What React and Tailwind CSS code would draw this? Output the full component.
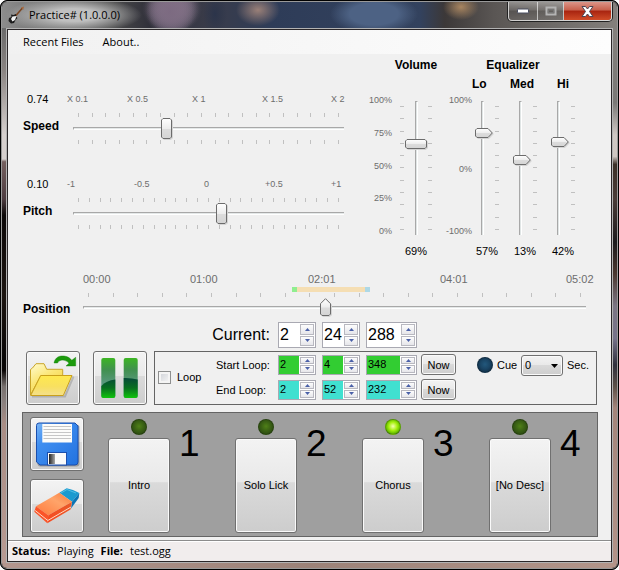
import { useState } from "react";

const UI = "font-['Liberation_Sans',Arial,sans-serif]";
const SEGOE = "font-['Open_Sans','Noto_Sans',sans-serif]";
const FACE =
  "rounded-[3px] border border-[#707070] shadow-[inset_0_0_0_1px_#fafafa] bg-[linear-gradient(#f3f3f3,#e9e9e9_46%,#dadada_47%,#cdcdcd)]";

function Ticks({ count, vertical = false, className = "" }) {
  return (
    <div className={`flex justify-between ${vertical ? "w-1 flex-col py-[5px]" : "h-1 px-[5px]"} ${className}`}>
      {Array.from({ length: count }, (_, i) => (
        <span key={i} className={vertical ? "h-px w-1 bg-[#c0c0c0]" : "h-1 w-px bg-[#c0c0c0]"} />
      ))}
    </div>
  );
}

const THUMBS = {
  tall: { w: 11, h: 21, d: "M2 .5H9L10.500 2V19L9 20.500H2L.5 19V2Z" },
  up: { w: 11, h: 18, d: "M5.500 .7 10.500 5.700V16L9 17.500H2L.5 16V5.700Z" },
  wide: { w: 22, h: 10, d: "M2 .5H20L21.500 2V8L20 9.500H2L.5 8V2Z" },
  right: { w: 18, h: 10, d: "M2 .5H13L17.300 5 13 9.500H2L.5 8V2Z" },
};

function Thumb({ kind }) {
  const t = THUMBS[kind];
  return (
    <svg width={t.w} height={t.h} viewBox={`0 0 ${t.w} ${t.h}`} className="block drop-shadow-[1px_1px_0_#d4d4d4]">
      <defs>
        <linearGradient id={`thumb-${kind}`} x1="0" y1="0" x2="0" y2="1">
          <stop offset="0" stopColor="#fff" />
          <stop offset=".5" stopColor="#ededed" />
          <stop offset=".55" stopColor="#dcdcdc" />
          <stop offset="1" stopColor="#d4d4d4" />
        </linearGradient>
      </defs>
      <path d={t.d} fill={`url(#thumb-${kind})`} stroke="#6c6c6c" />
    </svg>
  );
}

function HSlider({ label, min, max, step, initial, ticks, oneSided = false }) {
  const [value, setValue] = useState(initial);
  const pos = ((value - min) / (max - min)) * 100;
  return (
    <div className={`relative flex flex-col ${oneSided ? "h-6 gap-[9px]" : "h-[31px] justify-between"}`}>
      <Ticks count={ticks} />
      <div className="h-[3px] border-t border-b border-l border-t-[#a8a8a8] border-b-white border-l-[#a8a8a8] bg-[#e4e8e8]" />
      {!oneSided && <Ticks count={ticks} />}
      <div className="absolute top-[5px] right-[11px] left-0">
        <div className="absolute top-0" style={{ left: `${pos}%` }}>
          <Thumb kind={oneSided ? "up" : "tall"} />
        </div>
      </div>
      <input
        type="range"
        aria-label={label}
        min={min}
        max={max}
        step={step}
        value={value}
        onChange={(e) => setValue(+e.target.value)}
        className="absolute inset-0 h-full w-full opacity-0"
      />
    </div>
  );
}

function VSlider({ label, min, initial, kind }) {
  const [value, setValue] = useState(initial);
  const pos = ((100 - value) / (100 - min)) * 100;
  const wide = kind === "wide";
  return (
    <div className={`relative flex h-full justify-between ${wide ? "w-8" : "w-6"}`}>
      {wide && <Ticks count={11} vertical />}
      <div className={`w-[3px] border-t border-r border-l border-t-[#a8a8a8] border-r-white border-l-[#a8a8a8] bg-[#e0e5e5] ${wide ? "" : "ml-[6px]"}`} />
      <Ticks count={11} vertical />
      <div className={`absolute top-0 bottom-[10px] ${wide ? "left-[5px]" : "left-0"}`}>
        <div className="absolute left-0" style={{ top: `${pos}%` }}>
          <Thumb kind={kind} />
        </div>
      </div>
      <input
        type="range"
        aria-label={label}
        min={min}
        max={100}
        value={value}
        onChange={(e) => setValue(+e.target.value)}
        className="absolute inset-0 h-full w-full opacity-0 [direction:rtl] [writing-mode:vertical-lr]"
      />
    </div>
  );
}

function SpinButton({ up, label, onClick }) {
  return (
    <button
      type="button"
      aria-label={label}
      onClick={onClick}
      className="flex w-[14px] flex-1 items-center justify-center border border-[#b8b8c0] bg-[linear-gradient(#fdfdfd,#e6e6ea)]"
    >
      <svg width="5" height="3" viewBox="0 0 5 3" fill="#4a60a8">
        <path d={up ? "M2.500 0 5 3H0Z" : "M0 0H5L2.500 3Z"} />
      </svg>
    </button>
  );
}

function Spinner({ label, initial, wide = false, big = false, tone = "bg-white" }) {
  const [value, setValue] = useState(initial);
  return (
    <div className={`flex border border-[#a9a9b2] bg-white ${wide ? "w-[51px]" : "w-[38px]"} ${big ? "h-[26px]" : "h-5"}`}>
      <input
        type="text"
        inputMode="numeric"
        aria-label={label}
        value={value}
        onChange={(e) => setValue(Number(e.target.value) || 0)}
        className={`min-w-0 flex-1 pl-px leading-4 outline-none ${tone} ${big ? "text-[16px]" : "pb-[2px] text-[11px]"}`}
      />
      <div className="flex flex-col gap-px p-px">
        <SpinButton up label={`Increase ${label}`} onClick={() => setValue(value + 1)} />
        <SpinButton label={`Decrease ${label}`} onClick={() => setValue(value - 1)} />
      </div>
    </div>
  );
}

function TimeFields({ name, values, big, tone }) {
  return (
    <div className="flex gap-[6px]">
      <Spinner label={`${name} minutes`} initial={values[0]} big={big} tone={tone} />
      <Spinner label={`${name} seconds`} initial={values[1]} big={big} tone={tone} />
      <Spinner label={`${name} milliseconds`} initial={values[2]} big={big} tone={tone} wide />
    </div>
  );
}

const LED = {
  on: "bg-[radial-gradient(circle_at_50%_45%,#f4ffb0,#a6f010_40%,#6cc400_65%,#3f7010_90%)]",
  off: "bg-[radial-gradient(circle_at_50%_45%,#4f8018,#3a6114_45%,#2c4a12_80%)]",
  cue: "bg-[radial-gradient(circle_at_50%_45%,#22587c,#1a4565_45%,#123048_80%)]",
};

function Led({ state }) {
  return <span className={`block size-4 rounded-full border border-[#00000030] ${LED[state]}`} />;
}

function Bank({ number, text, active = false }) {
  return (
    <div className="flex gap-[9px]">
      <div className="flex flex-col items-center gap-[3px]">
        <Led state={active ? "on" : "off"} />
        <button type="button" className={`h-[95px] w-[62px] text-[11px] ${FACE}`}>
          {text}
        </button>
      </div>
      <span className="mt-[6px] w-[21px] text-[37px] leading-[37px]">{number}</span>
    </div>
  );
}

function IconButton({ label, children }) {
  return (
    <button type="button" aria-label={label} className={`size-[54px] shrink-0 ${FACE}`}>
      <svg viewBox="1 1 52 52" className="block size-[52px]">
        {children}
      </svg>
    </button>
  );
}

function OpenIcon() {
  return (
    <>
      <defs>
        <linearGradient id="folder-back" x1="0" y1="0" x2=".6" y2="1">
          <stop offset="0" stopColor="#fffbd0" />
          <stop offset=".5" stopColor="#fbe676" />
          <stop offset="1" stopColor="#f2d040" />
        </linearGradient>
        <linearGradient id="folder-front" x1="0" y1="0" x2="0" y2="1">
          <stop offset="0" stopColor="#ffe94e" />
          <stop offset=".55" stopColor="#f8e060" />
          <stop offset="1" stopColor="#f4e08c" />
        </linearGradient>
      </defs>
      <path d="M6 45.500H39L47.500 25.500" fill="none" stroke="#00000028" strokeWidth="2" />
      <path d="M4.500 44V18.500L6.500 17 10 12.700H18L20.700 18.300H36.700V25H14.700Z" fill="url(#folder-back)" stroke="#c9a52a" strokeLinejoin="round" />
      <path d="M14.700 24.500H46L37.300 44.500H4.700Z" fill="url(#folder-front)" stroke="#c9a01c" strokeLinejoin="round" />
      <path d="M28 12C29 6 34 4.500 38 5 42 5.400 44.500 7.500 45.800 9.300L49.700 6.300V15H40L43 12.200C40 8.800 34 7.500 31.500 12Z" fill="#1c9a0c" stroke="#12800a" strokeWidth=".4" />
    </>
  );
}

function PauseIcon() {
  return (
    <>
      <defs>
        <linearGradient id="pause-top" x1="0" y1="6" x2="0" y2="35" gradientUnits="userSpaceOnUse">
          <stop offset="0" stopColor="#3cb820" />
          <stop offset=".45" stopColor="#419050" />
          <stop offset="1" stopColor="#5e9a88" />
        </linearGradient>
        <linearGradient id="pause-low" x1="0" y1="27" x2="0" y2="47" gradientUnits="userSpaceOnUse">
          <stop offset="0" stopColor="#064a38" />
          <stop offset=".5" stopColor="#087020" />
          <stop offset="1" stopColor="#10c40c" />
        </linearGradient>
      </defs>
      <rect x="8.300" y="7" width="14" height="40" rx="2" fill="url(#pause-top)" />
      <path d="M8.300 35Q13 29.500 22.300 28.500V45Q22.300 47 20.300 47H10.300Q8.300 47 8.300 45Z" fill="url(#pause-low)" />
      <rect x="30.700" y="7" width="14" height="40" rx="2" fill="url(#pause-top)" />
      <path d="M30.700 27Q38 26.700 44.700 28.500V45Q44.700 47 42.700 47H32.700Q30.700 47 30.700 45Z" fill="url(#pause-low)" />
    </>
  );
}

function SaveIcon() {
  return (
    <>
      <defs>
        <linearGradient id="disk" x1="0" y1="0" x2="1" y2="1">
          <stop offset="0" stopColor="#7ab6f6" />
          <stop offset=".3" stopColor="#3f8ef0" />
          <stop offset="1" stopColor="#2272e0" />
        </linearGradient>
        <linearGradient id="shutter">
          <stop offset="0" stopColor="#222" />
          <stop offset="1" stopColor="#a8a8a8" />
        </linearGradient>
      </defs>
      <rect x="7.500" y="7.500" width="42" height="42" rx="3" fill="#00000040" />
      <path d="M9 6H45L48 9V45Q48 48 45 48H10L6.500 45V8.500Q6.500 6 9 6Z" fill="url(#disk)" stroke="#1b4fae" />
      <rect x="12.300" y="7" width="29.700" height="18.500" fill="#fcfcfa" />
      <path d="M13.500 9.500H41M13.500 12.500H41M13.500 15.500H41M13.500 18.500H41M13.500 21.500H41" stroke="#c6c6c6" />
      <rect x="17.500" y="35.500" width="19" height="12.500" fill="#fafafa" stroke="#1b4fae" />
      <rect x="19" y="37" width="6" height="10" fill="url(#shutter)" />
    </>
  );
}

function EraserIcon() {
  return (
    <>
      <defs>
        <linearGradient id="rubber" x1="0" y1="1" x2="1" y2="0">
          <stop offset="0" stopColor="#ff7a3c" />
          <stop offset=".6" stopColor="#ffa46a" />
          <stop offset="1" stopColor="#f87838" />
        </linearGradient>
        <linearGradient id="rubber-side" x1="0" y1="1" x2="1" y2="0">
          <stop offset="0" stopColor="#f84a20" />
          <stop offset="1" stopColor="#e85a28" />
        </linearGradient>
      </defs>
      <path d="M29.300 13.700 36.700 9.300Q43 10.500 49.300 14L42 22.700Z" fill="#1a9ad0" />
      <path d="M42 22.700 49.300 14 48.700 19 41 29.500Z" fill="#0b74b4" />
      <path d="M31 14 37 10.500 46 14" fill="none" stroke="#50bfe4" />
      <path d="M6 27.300 29.300 13.700 42 22.700 18.300 36.300Z" fill="url(#rubber)" />
      <path d="M6 27.300 18.300 36.300 17.300 44.300 4.300 32.800Z" fill="#fb5428" />
      <path d="M18.300 36.300 42 22.700 40.500 30.500 17.300 44.300Z" fill="url(#rubber-side)" />
      <path d="M5.200 31.500 17.800 41.500 41 28" fill="none" stroke="#ffd9c4" strokeWidth="1" />
    </>
  );
}

function TitleBar() {
  const glass =
    "bg-[linear-gradient(#ffffff50,#ffffff10_45%,#00000018_50%,#ffffff08)] border-white/60";
  return (
    <header className="flex h-[26px] items-start justify-between bg-[radial-gradient(ellipse_68px_18px_at_72px_13px,#c0c0c0_35%,#9a9a9a00),radial-gradient(ellipse_24px_26px_at_168px_10px,#7b6980dd,#7b698000),radial-gradient(ellipse_12px_22px_at_213px_12px,#28324acc,#28324a00),radial-gradient(ellipse_28px_24px_at_170px_6px,#857488,#85748800),radial-gradient(ellipse_30px_26px_at_170px_6px,#857488,#85748800),radial-gradient(ellipse_24px_24px_at_170px_8px,#6c6478,#6c647800),radial-gradient(ellipse_26px_24px_at_170px_8px,#6c6478,#6c647800),radial-gradient(ellipse_44px_20px_at_372px_12px,#4d6284_55%,#4d628400),radial-gradient(ellipse_22px_16px_at_256px_8px,#9a8078,#9a807800),radial-gradient(ellipse_18px_13px_at_459px_5px,#a88560,#a8856000),linear-gradient(90deg,#8c8c8c,#4a4a4a_18%,#30303a_24%,#3a3c4a_34%,#2e3c58_44%,#33425e_68%,#3c3838_72%,#5a5654_80%,#84807c)]">
      <div className="flex h-full items-center gap-[5px] pl-[6px]">
        <svg width="16" height="18" viewBox="0 0 16 18" aria-hidden="true">
          <path d="M7 10.500 14.500 2" stroke="#7a4522" strokeWidth="1.600" />
          <path d="M13.200 1.500 16 .5 15.200 4Z" fill="#a8683c" />
          <path d="M3 8.500 5.500 9 8 8 8 10.500 9.500 12 7.500 14 6 17 3 17.500 .5 15 1 12 3.500 11Z" fill="#1c1c1c" />
          <path d="M4.500 10.500 8.500 10 7 14 4.500 15.500 3 13Z" fill="#f2f2f2" />
        </svg>
        <h1 className={`text-[11px] leading-4 text-black ${SEGOE}`}>Practice# (1.0.0.0)</h1>
      </div>
      <div className="mr-[5px] flex h-[19px] overflow-hidden rounded-b-[4px] border border-t-0 border-white/70 shadow-[0_0_0_1px_#222]">
        <button type="button" aria-label="Minimize" className={`flex w-[29px] items-center justify-center border-r ${glass}`}>
          <svg width="12" height="6" viewBox="0 0 12 6">
            <rect x=".5" y="1" width="11" height="4" rx=".5" fill="#fff" stroke="#4a4e60" />
          </svg>
        </button>
        <button type="button" aria-label="Maximize" disabled className={`flex w-[26px] items-center justify-center border-r ${glass}`}>
          <svg width="12" height="10" viewBox="0 0 12 10" fill="none">
            <rect x="1.500" y="1.500" width="9" height="7" stroke="#b4b4b4" strokeWidth="2" />
            <rect x="3.500" y="3.500" width="5" height="3" stroke="#777" />
          </svg>
        </button>
        <button type="button" aria-label="Close" className="flex w-[47px] items-center justify-center bg-[linear-gradient(#dc9588,#c8604c_45%,#a82410_50%,#d04c28)]">
          <svg width="13" height="11" viewBox="0 0 13 11">
            <path d="M1 .5H4.500L6.500 3 8.500 .5H12L8.500 5.500 12 10.500H8.500L6.500 8 4.500 10.500H1L4.500 5.500Z" fill="#fff" stroke="#4c4452" />
          </svg>
        </button>
      </div>
    </header>
  );
}

function Percent({ children }) {
  return <output className="h-4 text-center text-[11px] leading-4">{children}</output>;
}

function Levels() {
  return (
    <div className="flex">
      <section aria-label="Volume" className="grid grid-cols-[24px_48px] grid-rows-[37px_143px_22px]">
        <h2 className="col-start-2 text-center text-[12px] leading-4 font-bold">Volume</h2>
        <div className="col-start-1 row-start-2 flex flex-col justify-between text-right text-[9px] leading-3 text-[#6d6d6d]">
          <span>100%</span>
          <span>75%</span>
          <span>50%</span>
          <span>25%</span>
          <span>0%</span>
        </div>
        <div className="row-start-2 flex justify-center pt-[7px] pb-[2px]">
          <VSlider label="Volume" min={0} initial={69} kind="wide" />
        </div>
        <div className="col-start-2 flex items-end justify-center">
          <Percent>69%</Percent>
        </div>
      </section>
      <section aria-label="Equalizer" className="grid grid-cols-[32px_38px_38px_30px] grid-rows-[16px_21px_143px_22px]">
        <h2 className="col-span-4 pl-2 text-center text-[12px] leading-4 font-bold">Equalizer</h2>
        <h3 className="col-start-2 pt-[3px] text-[12px] leading-4 font-bold">Lo</h3>
        <h3 className="pt-[3px] text-[12px] leading-4 font-bold">Med</h3>
        <h3 className="pt-[3px] text-center text-[12px] leading-4 font-bold">Hi</h3>
        <div className="flex flex-col justify-between text-right text-[9px] leading-3 text-[#6d6d6d]">
          <span>100%</span>
          <span className="pt-[6px]">0%</span>
          <span>-100%</span>
        </div>
        <div className="px-[3px] pt-[7px] pb-[2px]">
          <VSlider label="Low" min={-100} initial={57} kind="right" />
        </div>
        <div className="px-[3px] pt-[7px] pb-[2px]">
          <VSlider label="Medium" min={-100} initial={13} kind="right" />
        </div>
        <div className="px-[3px] pt-[7px] pb-[2px]">
          <VSlider label="High" min={-100} initial={42} kind="right" />
        </div>
        <div className="col-start-2 flex w-[30px] items-end justify-center">
          <Percent>57%</Percent>
        </div>
        <div className="flex w-[30px] items-end justify-center">
          <Percent>13%</Percent>
        </div>
        <div className="flex w-[30px] items-end justify-center">
          <Percent>42%</Percent>
        </div>
      </section>
    </div>
  );
}

function Tuning({ value, name, columns, labels, children }) {
  return (
    <section className="grid grid-cols-[44px_minmax(0,1fr)] grid-rows-[22px_31px]">
      <output className="pl-1 text-[11px] leading-4">{value}</output>
      <div className={`grid text-[9px] leading-4 whitespace-nowrap text-[#6d6d6d] ${columns}`}>
        {labels.map((l) => (
          <span key={l}>{l}</span>
        ))}
      </div>
      <h2 className="pt-[5px] text-[12px] leading-4 font-bold">{name}</h2>
      <div className="pl-[6px]">{children}</div>
    </section>
  );
}

export default function App() {
  const total = 302;
  const loop = { start: 125.5, end: 172.3 };
  const [looping, setLooping] = useState(false);
  return (
    <div className={`overflow-hidden rounded-[7px] border border-black bg-black text-[11px] text-black ${UI}`}>
      <div className="flex flex-col overflow-hidden rounded-[6px] border border-white/60">
        <TitleBar />
        <div className="flex">
          <div className="w-1 bg-[linear-gradient(#6a6a6a,#8a8482_8%,#d6d0ce_20%,#d6d0ce_24.500%,#75605f_25%,#4d3c40_32%,#0c0808_35%,#1c1410_50%,#080606_62%,#0a0606_64%,#77706e_67%,#8a807e_70%,#a98d85_74%,#b89a92)]" />
          <div className="min-w-0 flex-1 border border-white/70">
            <div className="flex flex-col border border-[#2a2628] bg-[#f0f0f0]">
              <nav className={`flex h-6 items-center gap-[19px] bg-[linear-gradient(90deg,#f1f1f1,#fdfdfd)] pl-[15px] text-[11px] ${SEGOE}`}>
                <button type="button">Recent Files</button>
                <button type="button">About..</button>
              </nav>

              <div className="flex gap-6 pt-[3px] pr-[33px] pl-[15px]">
                <div className="flex min-w-0 flex-1 flex-col gap-8 pt-[34px]">
                  <Tuning
                    value="0.74"
                    name="Speed"
                    columns="grid-cols-[60px_65px_70px_69px_auto]"
                    labels={["X 0.1", "X 0.5", "X 1", "X 1.5", "X 2"]}
                  >
                    <HSlider label="Speed" min={0.1} max={2} step={0.01} initial={0.74} ticks={20} />
                  </Tuning>
                  <Tuning
                    value="0.10"
                    name="Pitch"
                    columns="grid-cols-[67px_70px_61px_66px_auto]"
                    labels={["-1", "-0.5", "0", "+0.5", "+1"]}
                  >
                    <HSlider label="Pitch" min={-1} max={1} step={0.01} initial={0.1} ticks={25} />
                  </Tuning>
                </div>
                <Levels />
              </div>

              <section className="mt-3 grid grid-cols-[60px_minmax(0,1fr)] pr-[25px] pl-[15px]">
                <h2 className="self-end text-[12px] leading-4 font-bold">Position</h2>
                <div>
                  <div className="grid grid-cols-[107px_118px_132px_126px_auto] leading-4 whitespace-nowrap text-[#6d6d6d]">
                    <span>00:00</span>
                    <span>01:00</span>
                    <span>02:01</span>
                    <span>04:01</span>
                    <span>05:02</span>
                  </div>
                  <div
                    className="flex h-[5px]"
                    style={{ marginLeft: `${(loop.start / total) * 100}%`, width: `${((loop.end - loop.start) / total) * 100}%` }}
                  >
                    <span className="w-[5px] bg-[#90ee90]" />
                    <span className="flex-1 bg-[#f5deb3]" />
                    <span className="w-[5px] bg-[#add8e6]" />
                  </div>
                  <div className="pt-px">
                    <HSlider label="Position" min={0} max={total} step={0.1} initial={145.3} ticks={21} oneSided />
                  </div>
                </div>
              </section>

              <div className="mt-[5px] flex items-center gap-2">
                <span className="w-[262px] text-right text-[16px] leading-5">Current:</span>
                <TimeFields name="Current" values={[2, 24, 288]} big />
              </div>

              <div className="mt-[3px] flex pr-[14px] pl-[18px]">
                <div className="flex gap-[13px]">
                  <IconButton label="Open file">
                    <OpenIcon />
                  </IconButton>
                  <IconButton label="Pause">
                    <PauseIcon />
                  </IconButton>
                </div>
                <div className="ml-[7px] flex h-[54px] flex-1 items-start border border-[#646464] pt-[2px] pl-[3px] leading-4">
                  <label className="flex h-[46px] w-[58px] items-center gap-[6px]">
                    <input
                      type="checkbox"
                      checked={looping}
                      onChange={() => setLooping(!looping)}
                      className="size-[13px] appearance-none border border-[#8e8f8f] bg-[linear-gradient(135deg,#cdd0d6,#f8f8f8)] shadow-[inset_0_0_0_2px_#f4f4f4] checked:bg-[#4a5f97]"
                    />
                    Loop
                  </label>
                  <div className="grid grid-cols-[62px_auto_auto] items-center gap-y-1">
                    <span>Start Loop:</span>
                    <TimeFields name="Start loop" values={[2, 4, 348]} tone="bg-[#32cd32]" />
                    <button type="button" className={`ml-1 h-[21px] w-[35px] ${FACE}`}>
                      Now
                    </button>
                    <span>End Loop:</span>
                    <TimeFields name="End loop" values={[2, 52, 232]} tone="bg-[#40e0d0]" />
                    <button type="button" className={`ml-1 h-[21px] w-[35px] ${FACE}`}>
                      Now
                    </button>
                  </div>
                  <div className="ml-[21px] flex h-[22px] items-center gap-[4px] whitespace-nowrap">
                    <Led state="cue" />
                    <label htmlFor="cue" className="w-5">
                      Cue
                    </label>
                    <div className="relative">
                      <select
                        id="cue"
                        defaultValue="0"
                        className={`block h-[21px] w-[42px] appearance-none pl-[3px] ${FACE}`}
                      >
                        <option>0</option>
                        <option>1</option>
                        <option>2</option>
                        <option>5</option>
                      </select>
                      <svg width="7" height="4" viewBox="0 0 7 4" className="pointer-events-none absolute top-[9px] right-[5px]">
                        <path d="M0 0H7L3.500 4Z" />
                      </svg>
                    </div>
                    <span>Sec.</span>
                  </div>
                </div>
              </div>

              <section
                aria-label="Presets"
                className="mt-[7px] mr-[13px] ml-[14px] flex h-[125px] items-start border border-[#646464] bg-[#9f9f9f] pr-4 pl-[7px]"
              >
                <div className="mt-1 flex flex-col gap-2">
                  <IconButton label="Save preset">
                    <SaveIcon />
                  </IconButton>
                  <IconButton label="Erase preset">
                    <EraserIcon />
                  </IconButton>
                </div>
                <div className="ml-6 flex flex-1 justify-between pt-[6px]">
                  <Bank number={1} text="Intro" />
                  <Bank number={2} text="Solo Lick" />
                  <Bank number={3} text="Chorus" active />
                  <Bank number={4} text="[No Desc]" />
                </div>
              </section>

              <footer className={`mt-[3px] flex h-[21px] items-center border-t border-[#8c8c8c] bg-[#f1eded] pl-1 text-[11px] leading-4 shadow-[inset_0_1px_0_#fff] ${SEGOE}`}>
                <b>Status:</b>
                <span className="ml-[7px]">Playing</span>
                <b className="ml-[7px]">File:</b>
                <span className="ml-[7px]">test.ogg</span>
              </footer>
            </div>
          </div>
          <div className="w-1 bg-[linear-gradient(#84807c,#7a7876_14%,#d0c8c4_20%,#cfc6c2_24%,#3c3028_25.500%,#4a3c38_32%,#1c1a1c_40%,#4c3830_46%,#7c7684_52%,#77738a_58%,#30303c_63%,#5c5048_67%,#a4857b_71%,#b39389)]" />
        </div>
        <div className="h-[5px] bg-[linear-gradient(90deg,#b3968e,#9c8278_50%,#b3958a)]" />
      </div>
    </div>
  );
}
